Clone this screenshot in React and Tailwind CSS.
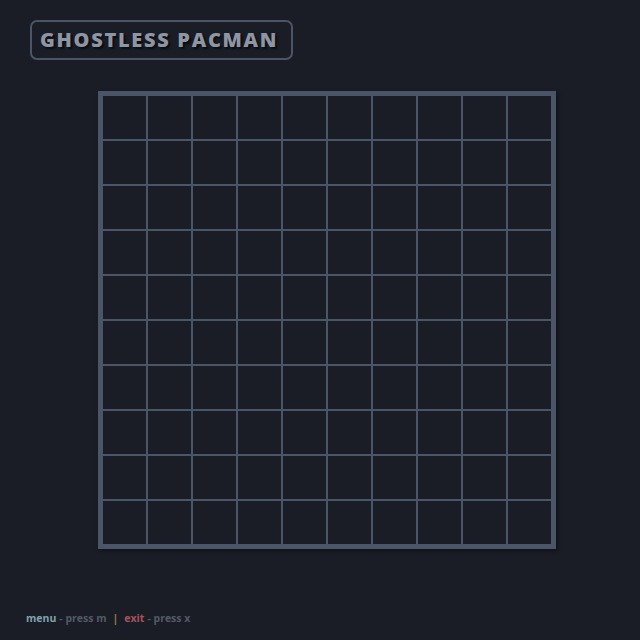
export default function App() {
  const cells = Array.from({ length: 100 });

  return (
    <div className="min-h-screen w-full bg-[#1a1d25] font-['Open_Sans',sans-serif] flex flex-col">
      {/* Title */}
      <div className="pt-[20px] pl-[30px]">
        <div className="inline-flex items-center h-[40px] pl-[8px] pr-[13px] border-2 border-[#4a5568] rounded-[7px]">
          <h1 className="text-[20px] font-extrabold tracking-[1.7px] text-[#8f96a3] leading-none [text-shadow:2px_2px_2px_rgba(0,0,0,0.6)]">
            GHOSTLESS PACMAN
          </h1>
        </div>
      </div>

      {/* Board */}
      <div className="mt-[31px] ml-[98px]">
        <div className="inline-grid grid-cols-10 border-4 border-[#4a5568] shadow-[2px_2px_4px_rgba(0,0,0,0.4)]">
          {cells.map((_, i) => (
            <div key={i} className="w-[45px] h-[45px] border border-[#4a5568]" />
          ))}
        </div>
      </div>

      {/* Footer */}
      <div className="mt-[64px] pl-[26px] text-[10.5px] font-bold leading-none flex items-center gap-[3px]">
        <span className="text-[#7fa3ad]">menu</span>
        <span className="text-[#525a68]">- press m</span>
        <span className="text-[#9a7a45] mx-[3px]">|</span>
        <span className="text-[#a8525c]">exit</span>
        <span className="text-[#525a68]">- press x</span>
      </div>
    </div>
  );
}
